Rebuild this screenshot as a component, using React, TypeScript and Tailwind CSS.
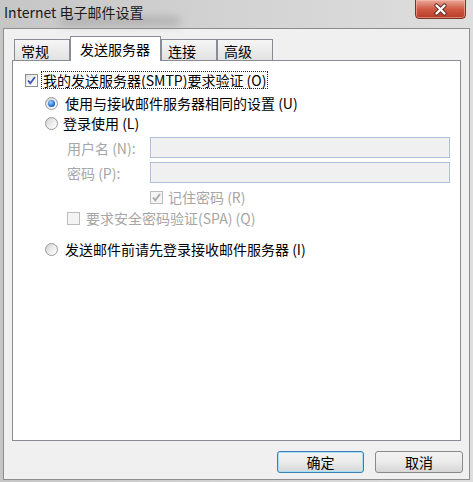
import React from "react";

function Check({ checked, disabled }: { checked?: boolean; disabled?: boolean }) {
  return (
    <span
      className={
        "relative inline-flex h-[13px] w-[13px] shrink-0 items-center justify-center border " +
        (disabled
          ? "border-[#bcbcbc] bg-[#f4f4f4]"
          : "border-[#8e8f8f] bg-gradient-to-br from-[#dcdcdc] via-[#f4f4f4] to-white")
      }
    >
      {checked && (
        <svg width="11" height="11" viewBox="0 0 11 11">
          <path
            d="M2 5.5 L4.3 8.2 L9 2"
            fill="none"
            stroke={disabled ? "#a8a8a8" : "#3b56b8"}
            strokeWidth="1.8"
          />
        </svg>
      )}
    </span>
  );
}

function Radio({ checked }: { checked?: boolean }) {
  return (
    <span className="relative inline-flex h-[13px] w-[13px] shrink-0 items-center justify-center rounded-full border border-[#9a9a9a] bg-gradient-to-br from-[#d0d0d0] via-[#ececec] to-white">
      {checked && (
        <span className="h-[7px] w-[7px] rounded-full bg-[radial-gradient(circle_at_40%_35%,#9fd3ff,#1e6ed0_60%,#0f4a9a)]" />
      )}
    </span>
  );
}

function Tab({ label, selected, w }: { label: string; selected?: boolean; w: string }) {
  if (selected) {
    return (
      <div
        className={
          "relative z-10 -mb-[1px] flex h-[25px] items-start border border-b-0 border-[#898c95] bg-white pl-[9px] pt-[2px] text-[14px] leading-[20px] text-black " +
          w
        }
      >
        {label}
      </div>
    );
  }
  return (
    <div
      className={
        "flex h-[21px] items-start border border-b-0 border-[#898c95] bg-gradient-to-b from-[#f6f6f6] to-[#e2e2e2] pl-[6px] pt-[1px] text-[14px] leading-[20px] text-black " +
        w
      }
    >
      {label}
    </div>
  );
}

export default function App() {
  return (
    <div className="relative flex h-[482px] w-[473px] flex-col overflow-hidden bg-gradient-to-r from-[#c6c6c6] via-[#d3d3d3] to-[#dedede] font-['Noto_Sans_CJK_SC','Liberation_Sans',sans-serif]">
      {/* title bar */}
      <div className="relative flex h-[28px] shrink-0 items-start">
        <div className="absolute left-[60px] top-[17px] h-[8px] w-[120px] rounded-full bg-[#9a9a9a] opacity-60 blur-[4px]" />
        <span className="relative pl-[4px] pt-[1px] text-[14px] leading-[22px] text-[#1a1a1a]">
          Internet 电子邮件设置
        </span>
        <div className="absolute right-[7px] top-[-1px] flex h-[20px] w-[51px] items-center justify-center rounded-b-[4px] border border-[#7a3326] bg-gradient-to-b from-[#e9a899] via-[#cf5a44] to-[#b73b27] shadow-[inset_0_0_0_1px_rgba(255,200,190,0.5)]">
          <svg width="15" height="13" viewBox="0 0 15 13">
            <path d="M3.5 2.5 L11.5 10.5 M11.5 2.5 L3.5 10.5" stroke="#5a2a22" strokeWidth="4.2" strokeLinecap="round" />
            <path d="M3.5 2.5 L11.5 10.5 M11.5 2.5 L3.5 10.5" stroke="#ffffff" strokeWidth="2.4" strokeLinecap="round" />
          </svg>
        </div>
      </div>

      {/* client area */}
      <div className="mx-[3px] mb-[2px] flex flex-1 flex-col border border-[#8d8d8d] bg-[#f0f0f0] pl-[8px] pt-[7px]">
        {/* tabs */}
        <div className="flex h-[24px] items-end pl-[2px]">
          <Tab label="常规" w="w-[56px]" />
          <Tab label="发送服务器" selected w="w-[91px]" />
          <Tab label="连接" w="w-[56px]" />
          <Tab label="高级" w="w-[56px]" />
        </div>
        {/* panel */}
        <div className="flex h-[381px] w-[449px] flex-col border border-[#898c95] bg-white pl-[12px] pt-[10px] text-[14px] text-black">
          <div className="flex h-[18px] items-center">
            <Check checked />
            <span className="ml-[3px] border border-dotted border-[#222] px-[1px] leading-[16px]">
              我的发送服务器(SMTP)要求验证 (O)
            </span>
          </div>
          <div className="mt-[4px] flex h-[20px] items-center pl-[20px]">
            <Radio checked />
            <span className="ml-[7px] leading-[20px]">使用与接收邮件服务器相同的设置 (U)</span>
          </div>
          <div className="flex h-[20px] items-center pl-[20px]">
            <Radio />
            <span className="ml-[5px] leading-[20px]">登录使用 (L)</span>
          </div>
          <div className="mt-[4px] flex h-[21px] items-center pl-[42px] text-[#a6a6a6]">
            <span className="w-[83px] leading-[20px]">用户名 (N):</span>
            <div className="h-[21px] w-[300px] border border-[#adc2d8] bg-[#f0f0f0]" />
          </div>
          <div className="mt-[4px] flex h-[21px] items-center pl-[42px] text-[#a6a6a6]">
            <span className="w-[83px] leading-[20px]">密码 (P):</span>
            <div className="h-[21px] w-[300px] border border-[#adc2d8] bg-[#f0f0f0]" />
          </div>
          <div className="mt-[4px] flex h-[20px] items-center pl-[125px] text-[#a6a6a6]">
            <Check checked disabled />
            <span className="ml-[5px] leading-[20px]">记住密码 (R)</span>
          </div>
          <div className="mt-[1px] flex h-[20px] items-center pl-[42px] text-[#a6a6a6]">
            <Check disabled />
            <span className="ml-[6px] leading-[20px]">要求安全密码验证(SPA) (Q)</span>
          </div>
          <div className="mt-[11px] flex h-[20px] items-center pl-[20px]">
            <Radio />
            <span className="ml-[7px] leading-[20px]">发送邮件前请先登录接收邮件服务器 (I)</span>
          </div>
        </div>
        {/* buttons */}
        <div className="mt-[10px] flex justify-end gap-[11px] pr-[6px]">
          <button className="flex h-[22px] w-[87px] items-center justify-center rounded-[3px] border border-[#3c7fb1] bg-gradient-to-b from-[#f2f2f2] via-[#ebebeb] to-[#d6d6d6] text-[14px] leading-[20px] text-black shadow-[inset_0_0_0_1px_#a8e0f8]">
            确定
          </button>
          <button className="flex h-[22px] w-[88px] items-center justify-center rounded-[3px] border border-[#8a8a8a] bg-gradient-to-b from-[#f2f2f2] via-[#ebebeb] to-[#d6d6d6] text-[14px] leading-[20px] text-black">
            取消
          </button>
        </div>
      </div>
    </div>
  );
}
